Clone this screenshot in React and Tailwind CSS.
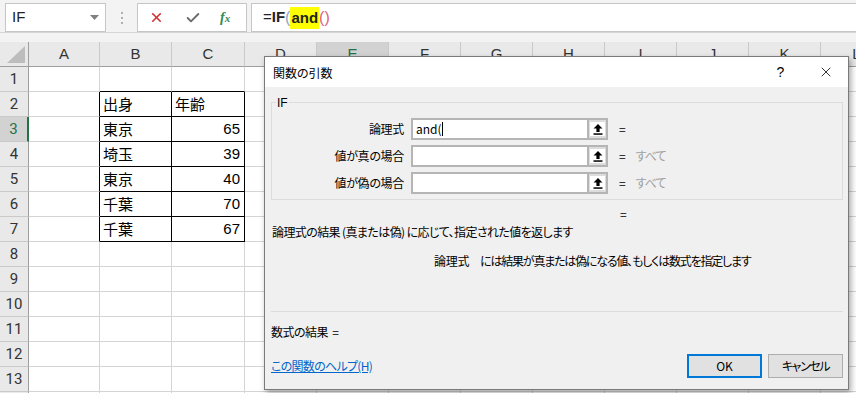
import clsx from "clsx";
import { X, Check } from "lucide-react";

const cols = ["A", "B", "C", "D", "E", "F", "G", "H", "I", "J", "K", "L"];
const rows = [1, 2, 3, 4, 5, 6, 7, 8, 9, 10, 11, 12, 13, 14];

// table B2:C7
const data = {
  2: ["出身", "年齢"],
  3: ["東京", 65],
  4: ["埼玉", 39],
  5: ["東京", 40],
  6: ["千葉", 70],
  7: ["千葉", 67],
};

const gridCols =
  "grid grid-cols-[29px_71px_72px_73px_72px_72px_72px_72px_72px_72px_72px_72px_72px]";

function RefButton() {
  return (
    <div className="w-[21px] h-[22px] border-2 border-[#b5b5b5] bg-[#dcdcdc] flex items-center justify-center">
      <div className="w-[15px] h-[14px] bg-white flex items-center justify-center">
        <svg width="10" height="11" viewBox="0 0 10 11">
          <path d="M5 0 L9.5 4.5 H6.6 V8 H3.4 V4.5 H0.5 Z" fill="#000" />
          <rect x="0.5" y="9.3" width="9" height="1.5" fill="#000" />
        </svg>
      </div>
    </div>
  );
}

function ArgRow({ label, value, hint }) {
  return (
    <div className="flex items-center h-[22px]">
      <div className="w-[132px] text-right tracking-[-0.3px]">{label}</div>
      <div className="ml-[7px] w-[176px] h-[22px] border-2 border-[#b5b5b5] border-r-0 bg-white flex items-center pl-[3px]">
        {value && (
          <>
            <span>{value}</span>
            <span className="w-px h-[14px] bg-black" />
          </>
        )}
      </div>
      <RefButton />
      <span className="ml-[11px]">=</span>
      {hint && <span className="ml-[10px] text-[#a0a0a0] tracking-[-1px]">{hint}</span>}
    </div>
  );
}

function Dialog() {
  return (
    <div className="absolute left-[264px] top-[56px] w-[585px] h-[334px] border border-[#7a7a7a] bg-[#f0f0f0] shadow-[2px_3px_6px_rgba(0,0,0,0.35)] z-10 flex flex-col text-[12px] text-black font-['Noto_Sans_CJK_JP',sans-serif] [font-feature-settings:'palt']">
      <div className="h-[30px] bg-white flex items-center justify-between shrink-0">
        <span className="pl-[8px] pt-[2px]">関数の引数</span>
        <div className="flex h-full">
          <div className="w-[45px] flex items-center justify-center text-[14px] font-['Liberation_Sans',sans-serif]">?</div>
          <div className="w-[45px] flex items-center justify-center">
            <X size={16} strokeWidth={1.2} color="#000" />
          </div>
        </div>
      </div>

      <div className="pl-[6px] pr-[5px] flex flex-col">
        <div className="relative mt-[15px] h-[98px] border border-[#dcdcdc] pt-[15px] flex flex-col gap-[5px]">
          <span className="absolute -top-[9px] left-[4px] px-[1px] bg-[#f0f0f0] font-['Liberation_Sans',sans-serif]">IF</span>
          <ArgRow label="論理式" value="and(" />
          <ArgRow label="値が真の場合" hint="すべて" />
          <ArgRow label="値が偽の場合" hint="すべて" />
        </div>

        <div className="mt-[6px] h-[16px] leading-[16px] pl-[349px]">=</div>
        <div className="mt-[2px] h-[16px] leading-[16px] pl-[1px] tracking-[-0.6px]">
          論理式の結果 (真または偽) に応じて、指定された値を返します
        </div>
        <div className="mt-[13px] h-[16px] leading-[16px] pl-[163px] flex">
          <span className="tracking-[-0.3px]">論理式</span>
          <span className="ml-[11px] tracking-[-1.2px]">には結果が真または偽になる値、もしくは数式を指定します</span>
        </div>

        <div className="mt-[42px] h-px bg-[#dcdcdc]" />

        <div className="mt-[12px] h-[16px] leading-[16px] tracking-[-0.5px]">
          数式の結果 <span className="ml-[2px]">=</span>
        </div>

        <div className="mt-[14px] flex items-center justify-between">
          <span className="text-[#0066cc] underline tracking-[-0.7px]">この関数のヘルプ(H)</span>
          <div className="flex gap-[6px]">
            <div className="w-[75px] h-[24px] border-2 border-[#0078d7] bg-[#e1e1e1] flex items-center justify-center">OK</div>
            <div className="w-[75px] h-[24px] border border-[#adadad] bg-[#e1e1e1] flex items-center justify-center tracking-[-1.4px]">キャンセル</div>
          </div>
        </div>
      </div>
    </div>
  );
}

function FormulaBar() {
  return (
    <div className="h-[33px] bg-[#f3f3f3] border-b border-[#d5d5d5] relative flex items-start pt-[3px]">
      <div className="ml-[5px] w-[101px] h-[29px] bg-white border border-[#c6c6c6] flex items-center justify-between pl-[6px] pr-[6px]">
        <span className="text-[15px] text-[#222]">IF</span>
        <svg width="9" height="5" viewBox="0 0 9 5">
          <path d="M0 0 H9 L4.5 5 Z" fill="#808080" />
        </svg>
      </div>
      <div className="ml-[15px] mt-[9px] flex flex-col gap-[3px]">
        <span className="w-[2px] h-[2px] bg-[#b0b0b0]" />
        <span className="w-[2px] h-[2px] bg-[#b0b0b0]" />
        <span className="w-[2px] h-[2px] bg-[#b0b0b0]" />
      </div>
      <div className="ml-[14px] w-[110px] h-[29px] bg-white border border-[#c6c6c6] flex items-center">
        <span className="ml-[11px]">
          <X size={15} strokeWidth={2.6} color="#d03030" />
        </span>
        <span className="ml-[21px]">
          <Check size={16} strokeWidth={2.8} color="#6a6a6a" />
        </span>
        <span className="ml-[19px] text-[#2e8b57] italic font-bold font-['Liberation_Serif',serif] text-[14px] leading-none">
          f<span className="text-[11px]">x</span>
        </span>
      </div>
      <div className="ml-[4px] flex-1 h-[29px] bg-white border border-[#c6c6c6] border-r-0 flex items-center pl-[11px] text-[15px]">
        <span className="text-[#222]">=</span>
        <span className="font-bold text-[#222]">IF</span>
        <span className="text-[#8aa5c4] text-[16px] font-light">(</span>
        <span className="font-bold text-[#222] bg-[#ffff00] leading-[22px] px-[1px]">and</span>
        <span className="text-[#e0607a] text-[16px] font-light">()</span>
      </div>
    </div>
  );
}

function Sheet() {
  return (
    <div className="font-['Liberation_Sans','Noto_Sans_CJK_JP',sans-serif]">
      <div className={clsx(gridCols, "h-[25px]")}>
        <div className="border-r border-b border-[#9e9e9e] bg-[#e9e9e9] flex items-end justify-end pr-[3px] pb-[3px]">
          <svg width="18" height="17" viewBox="0 0 18 17">
            <path d="M18 0 V17 H0 Z" fill="#bdbdbd" />
          </svg>
        </div>
        {cols.map((c) => (
          <div
            key={c}
            className={clsx(
              "border-r border-b border-r-[#c9c9c9] border-b-[#9e9e9e] flex items-center justify-center text-[15px]",
              c === "E" ? "bg-[#d2d2d2] text-[#217346]" : "bg-[#e9e9e9] text-[#333]"
            )}
          >
            {c}
          </div>
        ))}
      </div>
      {rows.map((r) => (
        <div key={r} className={clsx(gridCols, "h-[25px]")}>
          <div
            className={clsx(
              "border-b border-b-[#c9c9c9] flex items-center justify-center text-[15px] font-['Roboto',sans-serif]",
              r === 3
                ? "bg-[#d2d2d2] text-[#217346] border-r-2 border-r-[#217346]"
                : "bg-[#e9e9e9] text-[#333] border-r border-r-[#9e9e9e]"
            )}
          >
            {r <= 13 ? r : null}
          </div>
          {cols.map((c, i) => {
            const inTable = r >= 2 && r <= 7;
            const rightBlack = inTable && i <= 2;
            const bottomBlack = (i === 1 || i === 2) && r <= 7;
            const val = data[r] && (i === 1 ? data[r][0] : i === 2 ? data[r][1] : null);
            return (
              <div
                key={c}
                className={clsx(
                  "border-r border-b bg-white flex items-center text-[15px] text-black",
                  rightBlack ? "border-r-black" : "border-r-[#d4d4d4]",
                  bottomBlack ? "border-b-black" : "border-b-[#d4d4d4]",
                  typeof val === "number" ? "justify-end pr-[4px]" : "pl-[3px]",
                  r === 2 && (i === 1 || i === 2) && "bg-[#f2f2f2]",
                  typeof val === "string" && "font-['Noto_Sans_CJK_JP',sans-serif] text-[14.5px]"
                )}
              >
                {val}
              </div>
            );
          })}
        </div>
      ))}
    </div>
  );
}

export default function App() {
  return (
    <div className="relative w-[856px] h-[393px] overflow-hidden bg-white font-['Liberation_Sans','Noto_Sans_CJK_JP',sans-serif]">
      <FormulaBar />
      <div className="h-[9px] bg-[#f3f3f3]" />
      <Sheet />
      <Dialog />
    </div>
  );
}
